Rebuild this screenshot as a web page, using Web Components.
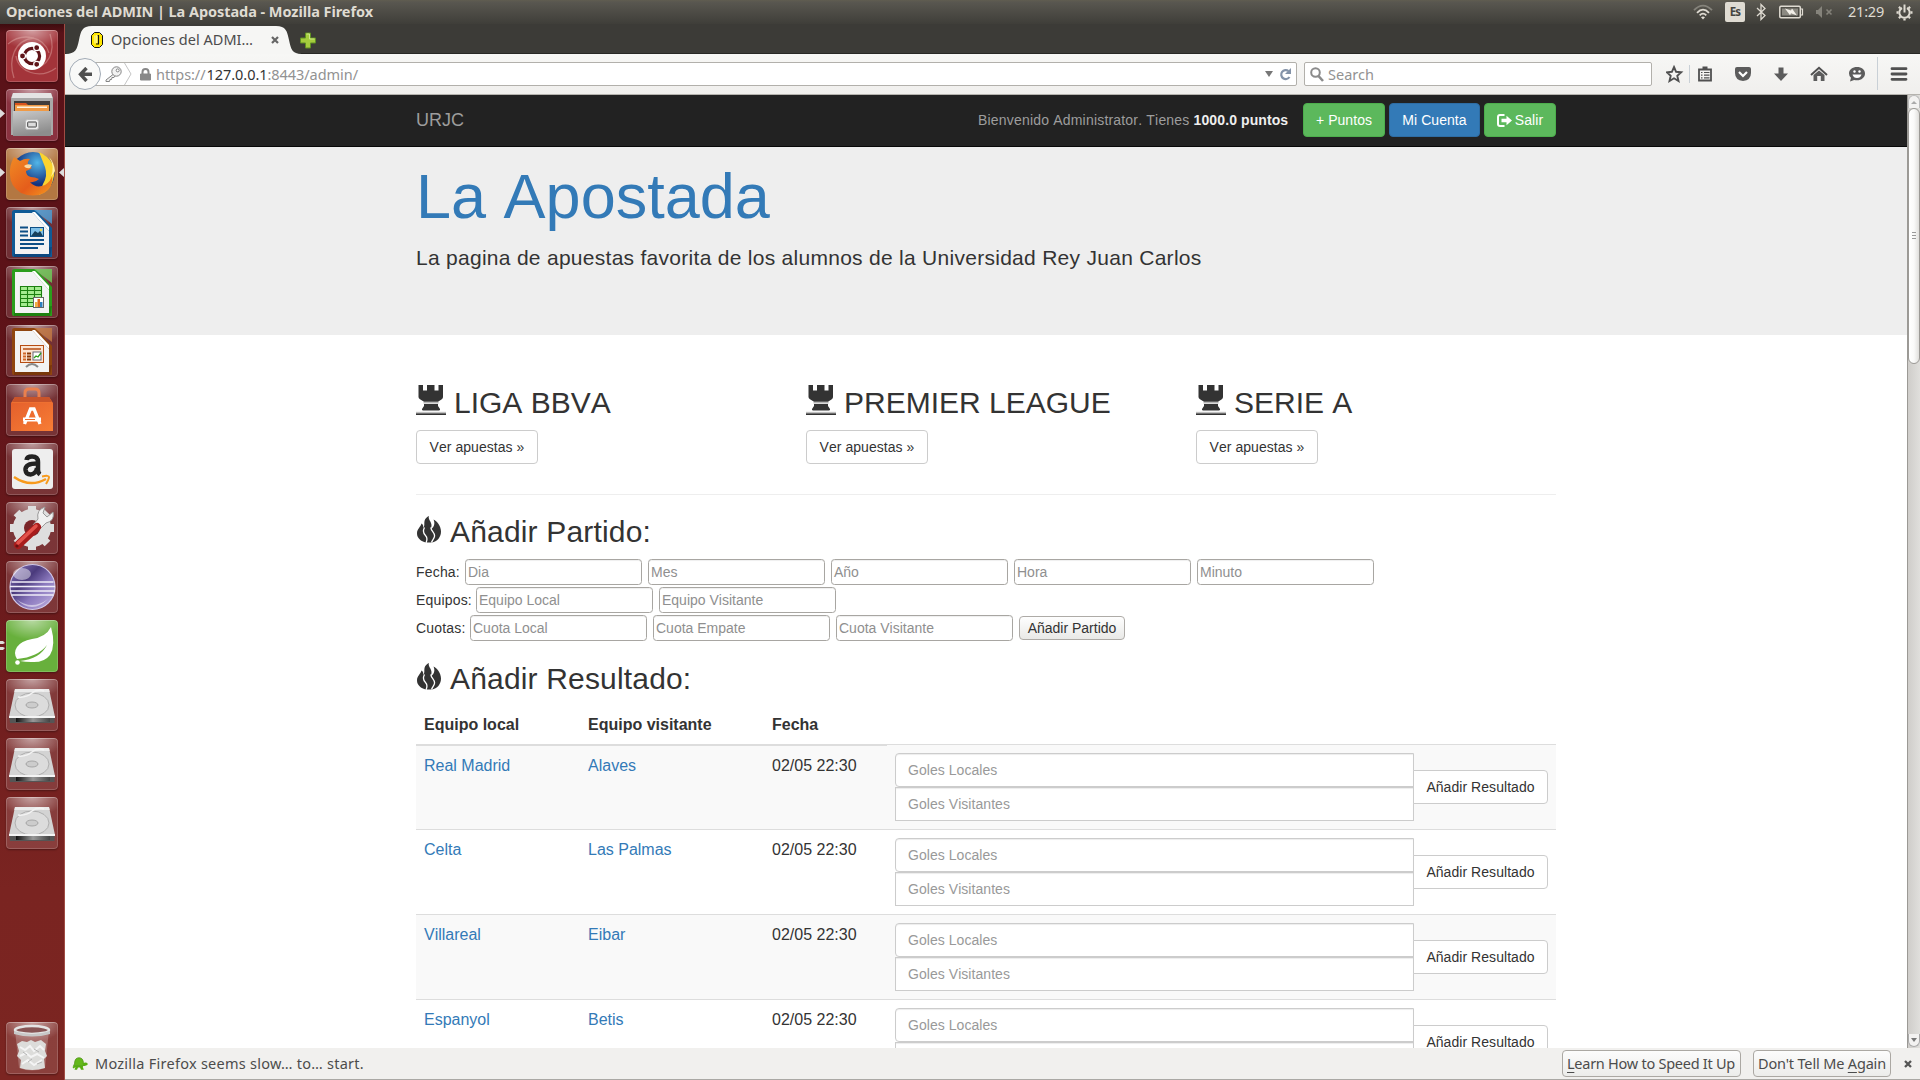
<!DOCTYPE html>
<html lang="es">
<head>
<meta charset="utf-8">
<title>Opciones del ADMIN | La Apostada</title>
<style>
html,body{margin:0;height:100%;overflow:hidden;background:#fff}
body{font-family:"Liberation Sans",Arial,sans-serif}
</style>
</head>
<body>
<desk-top></desk-top>
<script>
const CHROME = '"Noto Sans","Open Sans",sans-serif';
function component(name, css, html, after) {
  customElements.define(name, class extends HTMLElement {
    connectedCallback() {
      if (this.shadowRoot) return;
      const root = this.attachShadow({mode: 'open'});
      const body = typeof html === 'function' ? html(this) : html;
      root.innerHTML = `<style>*{box-sizing:border-box}svg{display:block}${css}</style>${body}`;
      if (after) after(this, root);
    }
  });
}

/* Text tracked to a given width */
component('fit-label', `:host{display:block;white-space:nowrap;font-family:${CHROME};flex:none}span{display:inline-block}`,
  '<span><slot></slot></span>', (el, root) => {
    const s = root.querySelector('span');
    const w = +el.getAttribute('w');
    const n = el.textContent.length;
    s.style.letterSpacing = (w - s.getBoundingClientRect().width) / n + 'px';
  });

/* ---------- top panel ---------- */
component('top-panel', `
:host{display:flex;height:24px;background:linear-gradient(#605d50 0,#595750 2px,#3f3e39);color:#dfdbd2;align-items:center;padding:0 7px 0 6px;font-size:14.5px;line-height:22px}
.t{font-weight:700;height:24px}
.ind{margin-left:auto;display:flex;align-items:center;height:24px}
.es{width:20px;height:20px;background:#dfdbd2;border-radius:2px;color:#45443f;font:700 11.5px/20px ${CHROME};text-align:center;letter-spacing:-.8px}
`, `<fit-label class="t" w="367">Opciones del ADMIN | La Apostada - Mozilla Firefox</fit-label>
<div class="ind">
<svg style="margin-right:12px" width="20" height="16" viewBox="0 0 20 16" fill="none" stroke="#dfdbd2" stroke-width="1.8"><path d="M1 6.2Q10-3 19 6.2" stroke="#85837b"/><path d="M4 8.8Q10 2.5 16 8.8M6.7 11.4Q10 8 13.3 11.4"/><path d="M8 13.3Q10 11.6 12 13.3L10 15.5z" fill="#dfdbd2" stroke="none"/></svg>
<div class="es">Es</div>
<svg style="margin-left:10px" width="12" height="18" viewBox="0 0 12 18" fill="none" stroke="#dfdbd2" stroke-width="1.3"><path d="M2 5l8 7.5-4 4V1.500l4 4L2 13"/></svg>
<svg style="margin-left:12px" width="25" height="14" viewBox="0 0 25 14"><rect x=".8" y="1.300" width="20.500" height="11.500" rx="1.200" fill="none" stroke="#dfdbd2" stroke-width="1.500"/><rect x="3" y="3.500" width="16" height="7" fill="#8c8a82"/><path d="M21.500 4h2v6h-2" fill="none" stroke="#dfdbd2" stroke-width="1.200"/><path d="M6 3.500l6 2 1-2 5 7-6-2.300-1 2z" fill="#f2efe8"/></svg>
<svg style="margin-left:12px" width="18" height="14" viewBox="0 0 18 14" fill="#85837b"><path d="M0 5h2l4-4v12l-4-4H0z"/><path d="M10.500 4.500l5 5M15.500 4.500l-5 5" stroke="#85837b" stroke-width="1.600"/></svg>
<fit-label w="36" style="margin-left:14px;height:24px">21:29</fit-label>
<svg style="margin-left:12px" width="17" height="17" viewBox="-8.500 -8.500 17 17" fill="none" stroke="#dfdbd2"><path d="M-2.500-4.500A5.200 5.200 0 1 0 2.500-4.500" stroke-width="2"/><path d="M0-8V0" stroke-width="2"/><path d="M-5.600-5.600l1.400 1.400M5.600-5.600L4.200-4.200M-8 0h2M8 0H6M-5.600 5.600l1.400-1.400M5.600 5.600L4.200 4.200M0 8V6" stroke-width="2.300"/></svg>
</div>`);

/* ---------- launcher ---------- */
const office = (c, d, l, inner) => `<path d="M8.500 3H30L46 21V49.500Q46 50 45 50H8Q6 50 6 48V5Q6 3 8.500 3z" fill="${c}"/><path d="M28 3H46V17z" fill="${l}" opacity=".8"/><path d="M8 46V50H44L46 40z" fill="${d}" opacity=".6"/><path d="M9 6H27L43 24V47H9z" fill="#f3f3f3"/><path d="M26 5L43 24V20L29 5z" fill="#fff"/>${inner}`;
const disk = `<path d="M9 10H43L49 38H3z" fill="#d3d3d3"/><path d="M9 10H43L43.700 13H8.300z" fill="#ebebeb"/><ellipse cx="26" cy="26" rx="17" ry="12" fill="#dcdcdc" stroke="#aeaeae"/><path d="M12 18Q20 19 26 14T38 12" stroke="#f3f3f3" fill="none" stroke-width="1.500"/><ellipse cx="26" cy="26" rx="6" ry="3" fill="#ccc" stroke="#999" stroke-width=".8"/><path d="M3 37H49V39H3z" fill="#f4f4f4"/><path d="M3.500 39H48.500V44H4z" fill="#555"/><path d="M10 39H44V43H10z" fill="url(#m)"/><defs><linearGradient id="m"><stop stop-color="#111"/><stop offset=".5" stop-color="#999"/><stop offset="1" stop-color="#444"/></linearGradient></defs>`;
const ICONS = {
dash: `<g fill="none" stroke="#e8b8b4" opacity=".4" stroke-width="1.300"><path d="M2 14C16 2 38 6 43 23M44 4c6 18-2 34-18 34M50 38C34 50 12 42 10 26M8 48C2 30 8 10 28 8"/></g><circle cx="26" cy="26" r="14" fill="#fff"/><circle cx="26" cy="26" r="7.600" fill="none" stroke="#5e1418" stroke-width="3.200"/><g fill="#5e1418" stroke="#fff" stroke-width="1.200"><circle cx="16.500" cy="26" r="3"/><circle cx="30.700" cy="17.700" r="3"/><circle cx="30.700" cy="34.300" r="3"/></g>`,
files: `<path d="M7 4H45L47 9V46H5V9z" fill="#a9a9a9"/><path d="M7 4H45L46.500 9H5.500z" fill="#e4e4e4"/><path d="M8 12H44V24H8z" fill="#403c3a"/><path d="M9 14H20L22 16H43V24H9z" fill="#d9541e"/><path d="M9 16H43V24H9z" fill="#f09a45"/><path d="M11 17.500H41V19H11z" fill="#fff3e0"/><path d="M7 22H45V47H7z" fill="url(#f)"/><rect x="19.500" y="30.500" width="13" height="10" rx="2" fill="#eee" stroke="#b8b8b8"/><rect x="21.700" y="33" width="8.600" height="5" rx=".5" fill="#ddd" stroke="#444"/><defs><linearGradient id="f" x2="0.300" y2="1"><stop stop-color="#c9c9c9"/><stop offset="1" stop-color="#8d8d8d"/></linearGradient></defs>`,
firefox: `<circle cx="27" cy="25.500" r="21.500" fill="url(#b)"/><path d="M33 4Q50 12 48 28Q46 42 33 47L37 36Q42 28 39 19z" fill="#fbd32f"/><path d="M43 9Q49 18 45 29L49 23Q48 14 43 9z" fill="#fff0a0"/><path d="M8 9L14 13Q19 10 24 11Q21 14 22 17L26 20Q23 22 20 23Q20 28 25 29Q29 29 33 31Q29 35 24 34Q30 41 39 37Q45 33 46 28Q48 39 38 45Q27 50 15 45Q4 38 4 27Q3 18 8 9z" fill="url(#o)"/><path d="M18 18Q21 15 26 17L24 20Q20 21 18 18z" fill="#fbd8a0"/><defs><radialGradient id="b" cx=".6" cy=".25"><stop stop-color="#52b6e8"/><stop offset="1" stop-color="#14327e"/></radialGradient><linearGradient id="o" y2="1"><stop stop-color="#f08a24"/><stop offset=".6" stop-color="#e55d1b"/><stop offset="1" stop-color="#f59a1f"/></linearGradient></defs>`,
writer: office('#0f5a96','#0a3c70','#4b9fd8',`<path d="M14 20.500h8M14 24.500h8M14 28.500h8M14 33h24M14 37h24M14 41h18" stroke="#0d4f86" stroke-width="1.900"/><rect x="24.500" y="20.500" width="13" height="9" fill="#7fc0e8" stroke="#0d4f86"/><path d="M25 29l4-5 3 2 2-2 3 5z" fill="#17405c"/><circle cx="35" cy="23" r="1.200" fill="#f4d648"/>`),
calc: office('#2b9e1c','#157009','#6ed05a',`<path d="M14.500 20.500h21v20h-21z" fill="#a5ec90"/><path d="M14.500 20.500h21v20h-21zM14.500 24.500h21M14.500 28.500h21M14.500 32.500h21M14.500 36.500h21M21.500 20.500v20M28.500 20.500v20" stroke="#1c8010" fill="none" stroke-width="1.100"/><rect x="27.500" y="31.500" width="10" height="10" fill="#fff" stroke="#666"/><path d="M29 36h2.500v5H29z" fill="#f0b040"/><path d="M31.500 33h2.500v8h-2.500z" fill="#e06818"/><path d="M34 36h2.500v5H34z" fill="#2d7fc0"/>`),
impress: office('#90450f','#6a2e06','#c47a44',`<rect x="14.500" y="20.500" width="23" height="17" fill="#fbe4d2" stroke="#b64c12"/><path d="M17 24h18" stroke="#b64c12" stroke-width="1.600"/><path d="M17 28.500h3M17 31.500h3M17 34.500h3" stroke="#d06828" stroke-width="2"/><path d="M21 28.500h4M21 31.500h4M21 34.500h4" stroke="#8a3a08" stroke-width="2"/><rect x="27" y="27" width="8" height="8" fill="#fff" stroke="#667"/><path d="M28 33l2-2 2 1 3-4" stroke="#2b9e1c" fill="none" stroke-width="1.300"/><path d="M20 42Q26 36 32 42" stroke="#888" fill="none" stroke-width="2"/>`),
software: `<path d="M19 16V9Q19 5 23 5H29Q33 5 33 9V16" fill="none" stroke="#e9804e" stroke-width="3"/><path d="M9 13H43L47 19V47H5V19z" fill="#ee7031"/><path d="M9 13H43L46 18H6z" fill="#c9542a"/><path d="M5 19H47V47H5z" fill="url(#s)"/><path d="M18.500 40L24.500 25H28L34 40" fill="none" stroke="#fff" stroke-width="3.300"/><path d="M17 35.500H35" stroke="#fff" stroke-width="4"/><path d="M19 35.500H29" stroke="#ee7031" stroke-width="1.200"/><defs><linearGradient id="s" y2="1"><stop stop-color="#e5602c"/><stop offset="1" stop-color="#f77d35"/></linearGradient></defs>`,
amazon: `<rect x="6" y="6" width="41" height="40" rx="3" fill="#eee"/><path d="M20.500 17Q21 13.500 26 13.500Q32 13.500 32 19V27Q32 30 34 31.500" fill="none" stroke="#222" stroke-width="4.500"/><path d="M31 20.500Q19 20.500 19.500 27Q20 31.500 24.500 31.500Q30 31 31 25" fill="none" stroke="#222" stroke-width="4.500"/><path d="M8 34Q24 45 40 36" fill="none" stroke="#f79a1d" stroke-width="2.500"/><path d="M36 33.500Q43 32 43 34T40 41" fill="none" stroke="#f79a1d" stroke-width="2"/>`,
settings: `<circle cx="26" cy="26" r="13" fill="none" stroke="#dedede" stroke-width="12"/><g stroke="#dedede" stroke-width="8"><path d="M26 4v8M26 40v8M4 26h8M40 26h8M10.500 10.500l6 6M35.500 35.500l6 6M10.500 41.500l6-6M41.500 10.500l-6 6"/></g><circle cx="26" cy="26" r="8" fill="#7a2529"/><path d="M32 17Q30 8 39 5L37 11l4 4 6-5Q49 19 40 21L33 28 27 23z" fill="#f0f0f0" stroke="#999"/><path d="M31 25L12 43" stroke="#a81c1c" stroke-width="8" stroke-linecap="round"/><path d="M30 24L12 41" stroke="#e2524b" stroke-width="3.500" stroke-linecap="round"/><circle cx="11" cy="44" r="1.600" fill="#6a1010"/>`,
eclipse: `<circle cx="26.500" cy="26" r="22.500" fill="url(#e)" stroke="#cfc6e6" stroke-width="1.200"/><path d="M5.500 21H47.500M4 25.500H49M4 30H49M5.500 34H47.500" stroke="#f0edf8" stroke-width="1.300"/><ellipse cx="16" cy="13" rx="9" ry="6" fill="#fff" opacity=".45"/><path d="M10 38Q26 50 42 38Q34 46 26 46T10 38z" fill="#fff" opacity=".5"/><defs><linearGradient id="e" y2="1"><stop stop-color="#8d7cc0"/><stop offset=".35" stop-color="#4a3a7c"/><stop offset=".6" stop-color="#8a78bd"/><stop offset="1" stop-color="#c2b4e2"/></linearGradient></defs>`,
spring: `<path d="M45 7Q50 25 44 35Q38 43 25 42Q19 42 14 41Q34 39 41 25Q32 37 11 39Q7 33 11 27Q15 21 26 19Q40 17 45 7z" fill="#fff"/><circle cx="11.500" cy="42.500" r="2.300" fill="#fff"/>`,
disk,
trash: `<path d="M9 8H43L39 46Q26 51 13 46z" fill="#fff" opacity=".22"/><path d="M11 22l5-3 5 1 4-2 4 2 6-2 5 4-1 7 2 5-3 3 1 9Q26 50 14 46l1-8-4-4 2-5z" fill="#dcdcda"/><path d="M14 25l5 3 5-4 4 5 6-5 4 4M14 34l6-3 5 4 6-3 7 4M16 42l6-4 6 5 8-5" stroke="#f4f4f4" stroke-width="2" fill="none"/><path d="M17 30l4 3M28 27l5 3M22 40l4-3M31 42l5-2" stroke="#b4b4b4" fill="none"/><ellipse cx="26" cy="8" rx="17" ry="4" fill="#855" stroke="#e4e4e4" stroke-width="2.500"/><path d="M8 9Q26 15 44 9V12Q26 17 8 12z" fill="#c8c8c8"/>`
};
component('launcher-tile', `
:host{display:block;position:relative;width:52px;height:52px;margin:0 0 7px 6px;flex:none}
.tile{width:52px;height:52px;border-radius:4px;background:radial-gradient(ellipse 32px 20px at 50% 0,#ffffff88,#ffffff00),var(--tile,#ffffff20);box-shadow:inset 0 0 0 1px #ffffff2c,inset 0 1px 0 #ffffff33,0 1px 2px #0005;overflow:hidden}
.l,.r{position:absolute;top:20px}.l{left:-6px}.r{right:-6px}
`, el => `<div class="tile"><svg width="52" height="52" viewBox="0 0 52 52">${ICONS[el.getAttribute('icon')]}</svg></div>
${el.hasAttribute('open') ? '<svg class="l" width="5" height="9"><path d="M0 0l5 4.500L0 9z" fill="#ddd"/></svg>' : ''}
${el.hasAttribute('pair') ? '<svg class="l" width="5" height="11"><path d="M0 1h3l2 2-2 1H0zM0 7h3l2 1-2 2H0z" fill="#ddd"/></svg>' : ''}
${el.hasAttribute('focused') ? '<svg class="r" width="5" height="9"><path d="M5 0L0 4.500 5 9z" fill="#ddd"/></svg>' : ''}`,
el => { const c = el.getAttribute('color'); if (c) el.style.setProperty('--tile', c); });
component('app-launcher', `
:host{display:flex;flex-direction:column;width:65px;box-sizing:border-box;height:1056px;flex:none;padding-top:6px;background:linear-gradient(#3e0c0f 0,#5a1218 9px,#5c1218 25%,#6a1a1c 52%,#7a2421 82%,#7b2521);border-right:1px solid #a04c44}
.end{margin-top:auto;margin-bottom:6px}
`, `<launcher-tile icon="dash" color="#a3343a"></launcher-tile><launcher-tile icon="files" open color="#8a3240"></launcher-tile><launcher-tile icon="firefox" open focused color="#b37742"></launcher-tile><launcher-tile icon="writer"></launcher-tile><launcher-tile icon="calc"></launcher-tile><launcher-tile icon="impress"></launcher-tile><launcher-tile icon="software"></launcher-tile><launcher-tile icon="amazon"></launcher-tile><launcher-tile icon="settings"></launcher-tile><launcher-tile icon="eclipse"></launcher-tile><launcher-tile icon="spring" pair color="#68b03c"></launcher-tile><launcher-tile icon="disk"></launcher-tile><launcher-tile icon="disk"></launcher-tile><launcher-tile icon="disk"></launcher-tile><launcher-tile class="end" icon="trash"></launcher-tile>`);

/* ---------- browser chrome ---------- */
component('tab-strip', `
:host{display:flex;height:30px;background:#3c3b37;box-shadow:inset 0 -1px #282825;align-items:flex-end}
.tab{width:237px;height:28px;display:flex;align-items:center;padding-left:26px;color:#4c4c4c;font-size:14.5px;line-height:26px;
background:no-repeat url("data:image/svg+xml,%3Csvg xmlns='http://www.w3.org/2000/svg' width='237' height='28'%3E%3Cpath d='M0 28C11 28 12 23 14 14C16 5 17 0 27 0H211C221 0 222 5 224 14C226 23 227 28 237 28z' fill='%23f6f6f4'/%3E%3C/svg%3E")}
fit-label{margin-left:8px;height:28px}
`, `<div class="tab"><svg width="12" height="16" viewBox="0 0 12 16"><path d="M3.500.5h5l3 3v9l-3 3h-5l-3-3v-9z" fill="#ffe600" stroke="#111"/><path d="M6.500 3.500h1v8.500H5" stroke="#111" stroke-width="1.200" fill="none"/><path d="M4 3.500v8M5.800 3v8" stroke="#fffbc0" stroke-width="1"/></svg>
<fit-label w="142">Opciones del ADMI…</fit-label>
<svg style="margin-left:18px" width="8" height="8"><path d="M1 1l6 6M7 1L1 7" stroke="#666" stroke-width="2.200"/></svg></div>
<svg style="margin:0 0 5px -2px" width="16" height="17" viewBox="0 0 16 17"><path d="M5.500 1h5v5h5v5h-5v5h-5v-5h-5V6h5z" fill="#a5cc3d" stroke="#5f8f22"/><path d="M6.500 2h3v5h5" fill="none" stroke="#cde68a"/></svg>`);
component('nav-bar', `
:host{display:flex;box-sizing:border-box;height:41px;background:linear-gradient(#f7f7f5,#f0efed);border-bottom:1px solid #b5b3ae;align-items:center;padding:0 8px 0 4px;font-size:14.5px;line-height:22px}
.back{width:32px;height:32px;border-radius:50%;border:1px solid #a2abb6;background:#f9f9f8;display:grid;place-items:center;flex:none;z-index:1}
.url{height:24px;width:1218px;margin-left:-22px;background:#fff;border:1px solid #b2b0ab;border-radius:2px;display:flex;align-items:center;padding-left:26px;flex:none;color:#929292}
.url b{font-weight:400;color:#333}
.search{height:24px;width:348px;margin-left:7px;background:#fff;border:1px solid #b2b0ab;border-radius:2px;display:flex;align-items:center;padding-left:5px;flex:none;color:#929292}
fit-label{height:23px}
`, `<div class="back"><svg width="15" height="15" viewBox="0 0 15 15" fill="none" stroke="#505050" stroke-width="3.400"><path d="M8.500 1L2.500 7.300 8.500 14M3 7.300H14"/></svg></div>
<div class="url">
<svg width="17" height="16" viewBox="0 0 17 16" fill="#f2f2f2" stroke="#848484" style="margin-left:-1px"><path d="M8 8.500L1 14v1.500h3.500l.5-2h1.500l.5-2H9l1-1.500"/><circle cx="11.500" cy="5.500" r="4.700"/><circle cx="12.700" cy="4.400" r="1.500" fill="#fff"/></svg>
<svg style="margin-left:2px" width="8" height="22" viewBox="0 0 8 22" fill="none" stroke="#c4c4c4"><path d="M.5 0L7 11 .5 22"/></svg>
<svg style="margin-left:8px" width="11" height="13" viewBox="0 0 11 13"><path d="M.5 6h10v6h-10z" fill="#888" stroke="#888" stroke-linejoin="round"/><path d="M2.500 6V4a3 3 0 0 1 6 0V6" fill="none" stroke="#888" stroke-width="2"/></svg>
<fit-label w="202" style="margin-left:5px">https://<b style="margin-left:1px">127.0.0.1</b>:8443/admin/</fit-label>
<svg style="margin-left:auto" width="8" height="6"><path d="M0 0h8L4 6z" fill="#777"/></svg>
<svg style="margin:0 4px 0 6px" width="13" height="13" viewBox="0 0 13 13"><path d="M10.500 9A4.500 4.500 0 1 1 9.500 3" fill="none" stroke="#8493a8" stroke-width="2.200"/><path d="M12 0v6H6z" fill="#8493a8"/></svg>
</div>
<div class="search"><svg width="14" height="15" viewBox="0 0 14 15" fill="none" stroke="#8b8b8b"><circle cx="5.500" cy="5.500" r="4.300" stroke-width="2"/><path d="M8.500 9l4.500 5" stroke-width="2.600"/></svg><fit-label w="46" style="margin-left:4px">Search</fit-label></div>
<svg style="margin-left:14px;flex:none" width="242" height="40" viewBox="0 0 242 40">
<path d="M8 13l2.100 4.800 5.100.5-3.900 3.500 1.200 5.200L8 24.300 3.500 27l1.200-5.200L.8 18.300l5.100-.5z" fill="none" stroke="#505050" stroke-width="1.900"/>
<path d="M23.500 11v18" stroke="#c9d0d6"/>
<g transform="translate(32 12.500)"><path d="M1 3h12v11H1z" fill="none" stroke="#505050" stroke-width="1.800"/><path d="M4.500 0h5v3h-5z" fill="#505050"/><path d="M3 6h1.500M6 6h5.500M3 8.700h1.500M6 8.700h5.500M3 11.400h1.500M6 11.400h5.500" stroke="#505050" stroke-width="1.200"/></g>
<g transform="translate(69 13)"><path d="M2 0h12q2 0 2 2v4q0 7-8 8-8-1-8-8V2q0-2 2-2z" fill="#5c5c5c"/><path d="M4 5l4 4 4-4" fill="none" stroke="#fff" stroke-width="2.200"/></g>
<path d="M112.500 13.500h5v6h4.500l-7 7.500-7-7.500h4.500z" fill="#5c5c5c"/>
<g transform="translate(145 13)"><path d="M0 8L8 0.800 16 8" fill="none" stroke="#505050" stroke-width="2"/><path d="M2.500 8L8 3.500 13.500 8v6H9.800V9H6.200v5H2.500z" fill="#5c5c5c"/></g>
<g transform="translate(183 13)"><path d="M8 0c4.500 0 8 2.600 8 6.500S12.500 13.300 8 13.300c-1 0-2-.1-2.800-.4L1 14.500l1-3.700Q0 9 0 6.500C0 2.600 3.500 0 8 0z" fill="#5c5c5c"/><circle cx="5.500" cy="4.500" r="1.200" fill="#fff"/><circle cx="10.500" cy="4.500" r="1.200" fill="#fff"/><path d="M3.500 7.500h9Q11.500 11 8 11T3.500 7.500z" fill="#fff"/></g>
<path d="M211.500 3v33" stroke="#c9d0d6"/>
<path d="M226 14.700h14M226 20h14M226 25.300h14" stroke="#505050" stroke-width="2.800" stroke-linecap="round"/></svg>`);
component('scroll-bar', `
:host{display:flex;flex-direction:column;box-sizing:border-box;width:13px;height:953px;flex:none;background:linear-gradient(90deg,#cfcdca,#e0dfdc);border-left:1px solid #9b9995}
.b{height:13px;display:grid;place-items:center;background:#f3f2f1;flex:none}
.up{border-radius:6px 6px 0 0;border:1px solid #bbb;border-bottom:0}.dn{border-radius:0 0 6px 6px;border:1px solid #aaa;border-top:0;margin-top:auto;margin-bottom:1px}
.thumb{height:256px;border:1px solid #9c9a96;border-radius:6px;background:linear-gradient(90deg,#fff,#fafaf9 50%,#e0dfdc);display:grid;place-items:center}
`, `<div class="b up"><svg width="6" height="3"><path d="M0 3h6L3 0z" fill="#aaa"/></svg></div><div class="thumb"><svg width="5" height="8"><path d="M0 .5h4M0 3.500h4M0 6.500h4" stroke="#999"/></svg></div><div class="b dn"><svg width="6" height="4"><path d="M0 0h6L3 4z" fill="#777"/></svg></div>`);
component('notice-bar', `
:host{display:flex;box-sizing:border-box;height:32px;background:#f1f0ee;border-bottom:1px solid #aaa8a4;align-items:center;color:#4c4c4c;font-size:14.5px;line-height:25px;padding:0 8px 0 7px}
.b{height:27px;border:1px solid #aba8a3;border-radius:4px;background:linear-gradient(#fcfcfc,#ececea);padding-left:4px;flex:none}
u{text-underline-offset:3px;text-decoration-thickness:1px}
`, `<svg width="16" height="14" viewBox="0 0 16 14"><path d="M2.500 7Q2.500 .7 7 .7T11.500 7l1 1.500H1.500z" fill="#63b81a" stroke="#458c0c" stroke-width=".7"/><path d="M10.500 6.500q3.500-2 5.300.3 0 2-4.300 2.200zM2 8.500h9.500l-.7 1.500 1 2.800H9L8 10.500H6L5 12.800H2.500L3.500 10 1.500 11.500 .5 10z" fill="#57ad10"/></svg>
<fit-label w="269" style="margin-left:7px;height:25px">Mozilla Firefox seems slow… to… start.</fit-label>
<div class="b" style="width:179px;margin-left:auto"><fit-label w="168"><u>L</u>earn How to Speed It Up</fit-label></div>
<div class="b" style="width:138px;margin:0 13px 0 12px"><fit-label w="128">Don't Tell Me <u>A</u>gain</fit-label></div>
<svg width="8" height="8"><path d="M1 1l6 6M7 1L1 7" stroke="#555" stroke-width="2.300"/></svg>`);

/* ---------- web page ---------- */
component('bs-button', `
:host{display:inline-flex;box-sizing:border-box;align-items:center;justify-content:center;height:34px;border:1px solid #ccc;border-radius:4px;background:#fff;color:#333;font-size:14px;line-height:20px;flex:none;white-space:nowrap;letter-spacing:.05px}
:host([kind=success]){background:#5cb85c;border-color:#4cae4c;color:#fff}
:host([kind=primary]){background:#337ab7;border-color:#2e6da4;color:#fff}
`, '<slot></slot>');
component('site-header', `
:host{display:block;box-sizing:border-box;background:#222;height:52px;border-bottom:1px solid #080808;color:#9d9d9d}
.c{width:1140px;margin:0 auto;display:flex;align-items:center;padding-top:8px}
.brand{font-size:18px;line-height:34px}
.w{margin-left:auto;font-size:14px;margin-right:15px;width:310px;white-space:nowrap;letter-spacing:.19px}.w b{color:#eee;letter-spacing:.1px}
bs-button+bs-button{margin-left:4px}
`, `<div class="c"><span class="brand">URJC</span><span class="w">Bienvenido Administrator. Tienes <b>1000.0 puntos</b></span>
<bs-button kind="success" style="width:82px">+ Puntos</bs-button><bs-button kind="primary" style="width:91px">Mi Cuenta</bs-button><bs-button kind="success" style="width:72px"><svg style="display:block;margin-right:3px" width="15" height="13" viewBox="0 0 15 13"><path d="M7.500 1H3Q1 1 1 3V10Q1 12 3 12H7.500" fill="none" stroke="#fff" stroke-width="2"/><path d="M4.500 4.700H9.500V1.800L15 6.500 9.500 11.200V8.300H4.500z" fill="#fff"/></svg>Salir</bs-button></div>`);
component('hero-banner', `
:host{display:block;box-sizing:border-box;background:#eee;height:188px}
.c{width:1140px;margin:0 auto;padding-top:14px}
h1{margin:0;font-size:63px;line-height:70px;color:#337ab7;font-weight:400}
p{margin:12px 0 0;font-size:21px;line-height:30px;color:#333;letter-spacing:.28px}
`, `<div class="c"><h1>La Apostada</h1><p>La pagina de apuestas favorita de los alumnos de la Universidad Rey Juan Carlos</p></div>`);
component('icon-heading', `
:host{display:flex;height:33px;font-size:30px;line-height:33px;color:#333;white-space:nowrap}
:host([icon=fire]){letter-spacing:.17px}
`, el => (el.getAttribute('icon') === 'tower'
 ? `<svg style="margin:-1px 8px 0 0" width="30" height="30" viewBox="0 0 30 30" fill="#333"><path d="M2.500 0H7V5.500H11V0H18.500V5.500H22.500V0H27V12Q27 13.500 25.800 14.300L22 16.700H8L4 14.300Q2.500 13.500 2.500 12z"/><path d="M7.500 17.400h15v.9h-15z" opacity=".6"/><path d="M8 19H22V21L24 24Q24.500 25.400 23 25.400H7Q5.500 25.400 6 24L8 21z"/><path d="M0 26.900h30v.7H0z" opacity=".5"/><path d="M0 28.300H30V30H0z"/></svg>`
 : `<svg style="margin:1px 9px 0 1px" width="24" height="27" viewBox="0 0 24 27"><path d="M12 0C10.500 3 15 6 14.500 10C14.300 11.500 13.800 12 14 13C15.500 12.500 17 10.500 17.300 8C17.500 6 17 5 16.500 3.500C20 5 24 10 24 15.500C24 21.500 20 25.500 15 26.500L9 26.500C4 25.500 0 22 0 17.500C0 12.500 3.500 11.500 4.500 7.500C6 8.500 6.500 10 6.200 12C8 10 7 7.500 7.500 5C8 2.500 10 1 12 0z" fill="#333"/><path d="M7.500 11.500C5.500 15 6.500 17.500 8.500 19.500C10.500 21.500 10.300 24 9 27" fill="none" stroke="#fff" stroke-width="1.300"/><path d="M13.800 11.500C14 15 18 16.500 17.600 20C17.300 22.500 15.500 23.500 14.500 26.500" fill="none" stroke="#fff" stroke-width="1.300"/></svg>`) + '<span><slot></slot></span>');
component('league-card', `
:host{display:block;width:390px;flex:none}bs-button{margin-top:11px;width:122px}
`, `<icon-heading icon="tower"><slot></slot></icon-heading><bs-button>Ver apuestas »</bs-button>`);
component('text-box', `
:host{display:block;box-sizing:border-box;width:177px;height:26px;border:1px solid #a8a6a2;border-radius:3.500px;background:#fff;box-shadow:inset 0 1px 1px #0001;color:#8f8f8f;font-size:14px;line-height:25px;padding-left:2px;margin-right:6px;flex:none}
`, '<slot></slot>');
component('match-form', `
:host{display:block;margin-top:10px;color:#333;font-size:14px}
.r{display:flex;height:28px;align-items:center}
label{line-height:28px;height:28px;white-space:nowrap;letter-spacing:.18px}
.btn{height:24px;width:106px;border:1px solid #aeaba7;border-radius:4px;background:linear-gradient(#fefefe,#e9e9e7);text-align:center;line-height:22px;white-space:nowrap}
`, `<div class="r"><label style="width:49px">Fecha:</label><text-box>Dia</text-box><text-box>Mes</text-box><text-box>Año</text-box><text-box>Hora</text-box><text-box>Minuto</text-box></div>
<div class="r"><label style="width:60px">Equipos:</label><text-box>Equipo Local</text-box><text-box>Equipo Visitante</text-box></div>
<div class="r"><label style="width:54px">Cuotas:</label><text-box>Cuota Local</text-box><text-box>Cuota Empate</text-box><text-box>Cuota Visitante</text-box><div class="btn">Añadir Partido</div></div>`);
component('result-row', `
:host{display:flex;box-sizing:border-box;height:85px;border-top:1px solid #ddd;font-size:16px;line-height:23px;color:#333;padding:8px;flex:none}
:host([odd]){background:#f9f9f9}
:host([first]) .c{padding-top:1px}
.a{width:164px}.b{width:184px}.d{width:123px}.a,.b{color:#337ab7}
.g{width:519px}
.i{height:34px;border:1px solid #ccc;background:#fff;box-shadow:inset 0 1px 1px #00000013;color:#999;font-size:14px;line-height:32px;padding-left:12px;letter-spacing:.05px}
.i:first-child{border-radius:4px 0 0 4px}
bs-button{margin:17px 0 0 -1px;width:135px;border-radius:0 4px 4px 0}
`, el => { const [a, b] = el.getAttribute('teams').split('|'); return `<div class="c a">${a}</div><div class="c b">${b}</div><div class="c d">02/05 22:30</div><div class="g"><div class="i">Goles Locales</div><div class="i">Goles Visitantes</div></div><bs-button>Añadir Resultado</bs-button>`; });
component('results-table', `
:host{display:block;margin-top:10px;color:#333}
.h{display:flex;height:39px;padding:8px;font-size:16px;font-weight:700;line-height:23px}
.a{width:164px}.b{width:184px}
.rule{width:471px;height:2px;background:#ddd;margin-bottom:-2px;position:relative}
`, `<div class="h"><div class="a">Equipo local</div><div class="b">Equipo visitante</div><div>Fecha</div></div><div class="rule"></div>
<result-row odd first teams="Real Madrid|Alaves"></result-row><result-row teams="Celta|Las Palmas"></result-row><result-row odd teams="Villareal|Eibar"></result-row><result-row teams="Espanyol|Betis"></result-row>`);
component('bet-page', `
:host{display:block;flex:1;height:953px;overflow:hidden;background:#fff;font-kerning:none}
main{width:1140px;margin:0 auto;padding-top:51px}
.l{display:flex}
hr{border:0;height:1px;background:#eee;margin:30px 0 20px}
`, `<site-header></site-header><hero-banner></hero-banner><main><div class="l"><league-card>LIGA BBVA</league-card><league-card>PREMIER LEAGUE</league-card><league-card>SERIE A</league-card></div><hr>
<icon-heading icon="fire">Añadir Partido:</icon-heading><match-form></match-form><icon-heading icon="fire" style="margin-top:20px">Añadir Resultado:</icon-heading><results-table></results-table></main>`);
component('desk-top', `
:host{display:block;width:1920px;height:1080px;overflow:hidden}
.body{display:flex}.win{flex:1;min-width:0}.view{display:flex}
`, `<top-panel></top-panel><div class="body"><app-launcher></app-launcher><div class="win"><tab-strip></tab-strip><nav-bar></nav-bar><div class="view"><bet-page></bet-page><scroll-bar></scroll-bar></div><notice-bar></notice-bar></div></div>`);
</script>
</body>
</html>
